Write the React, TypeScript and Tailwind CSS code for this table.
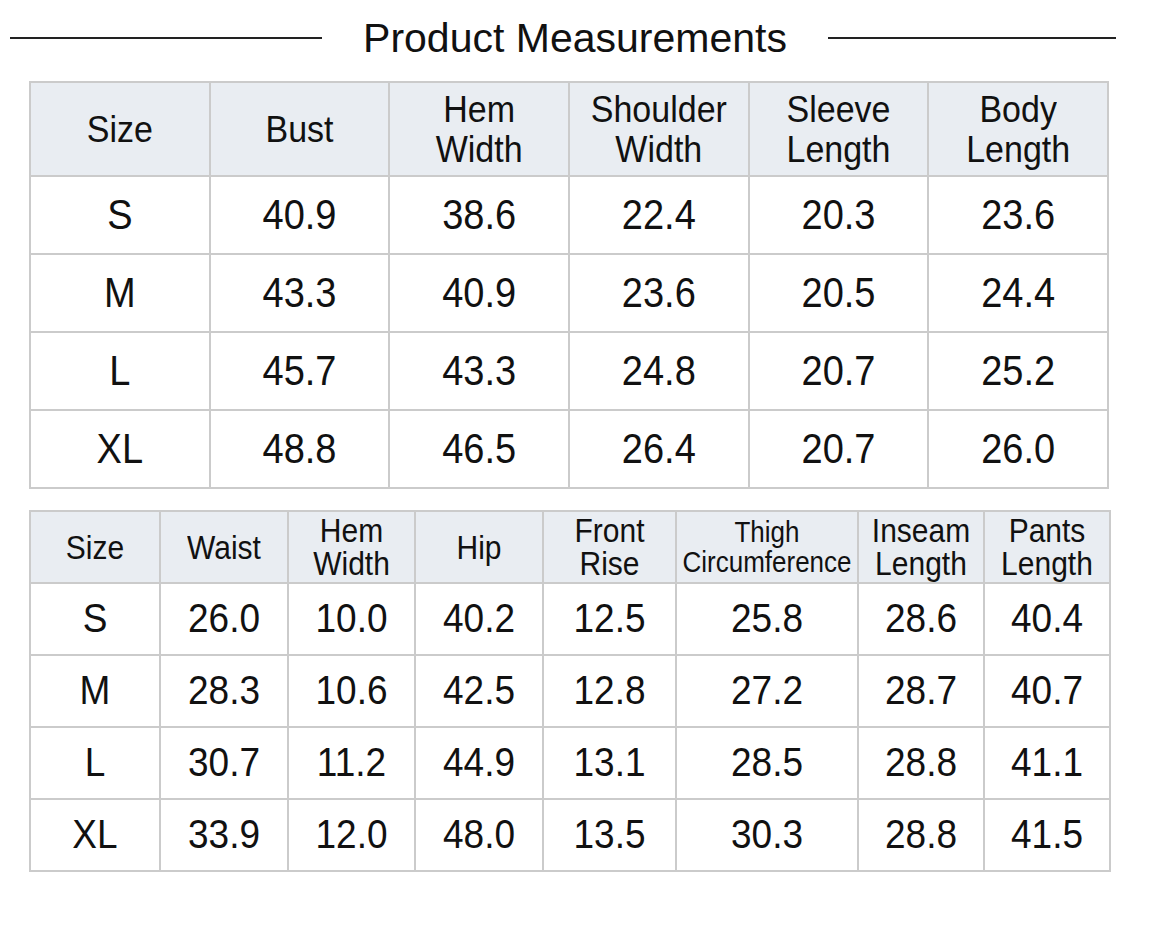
import React from "react";

const top = {
  headers: [["Size"], ["Bust"], ["Hem", "Width"], ["Shoulder", "Width"], ["Sleeve", "Length"], ["Body", "Length"]],
  rows: [
    ["S", "40.9", "38.6", "22.4", "20.3", "23.6"],
    ["M", "43.3", "40.9", "23.6", "20.5", "24.4"],
    ["L", "45.7", "43.3", "24.8", "20.7", "25.2"],
    ["XL", "48.8", "46.5", "26.4", "20.7", "26.0"],
  ],
};

const bottom = {
  headers: [["Size"], ["Waist"], ["Hem", "Width"], ["Hip"], ["Front", "Rise"], ["Thigh", "Circumference"], ["Inseam", "Length"], ["Pants", "Length"]],
  rows: [
    ["S", "26.0", "10.0", "40.2", "12.5", "25.8", "28.6", "40.4"],
    ["M", "28.3", "10.6", "42.5", "12.8", "27.2", "28.7", "40.7"],
    ["L", "30.7", "11.2", "44.9", "13.1", "28.5", "28.8", "41.1"],
    ["XL", "33.9", "12.0", "48.0", "13.5", "30.3", "28.8", "41.5"],
  ],
};

export default function App() {
  return (
    <div
      className="w-[1149px] h-[928px] bg-white text-[#111] overflow-hidden"
      style={{ fontFamily: '"Liberation Sans", Arial, sans-serif' }}
    >
      <div className="h-[76px] flex items-center pl-[10px] pr-[33px]">
        <div className="w-[312px] h-[1.5px] bg-[#222]" />
        <div className="flex-1 text-center text-[41px] leading-[48px]">Product Measurements</div>
        <div className="w-[288px] h-[1.5px] bg-[#222]" />
      </div>

      <div className="mt-[5px] ml-[29px] w-[1080px] bg-[#cbcbcb] p-[2px] grid grid-cols-6 gap-[2px]">
        {top.headers.map((h, i) => (
          <div key={i} className="h-[92px] bg-[#e9edf2] flex flex-col items-center justify-center text-[34px] leading-[40px]">
            {h.map((l, j) => (
              <span key={j} className="inline-block scale-y-110">{l}</span>
            ))}
          </div>
        ))}
        {top.rows.map((r, ri) =>
          r.map((c, ci) => (
            <div key={ri + "-" + ci} className="h-[76px] bg-white flex items-center justify-center text-[38px]">
              <span className="inline-block scale-y-110">{c}</span>
            </div>
          ))
        )}
      </div>

      <div className="mt-[21px] ml-[29px] w-[1082px] bg-[#cbcbcb] p-[2px] grid grid-cols-[128px_126px_125px_126px_131px_180px_124px_124px] gap-[2px]">
        {bottom.headers.map((h, i) => (
          <div
            key={i}
            className={
              "h-[70px] bg-[#e9edf2] flex flex-col items-center justify-center " +
              (i === 5 ? "text-[26px] leading-[30px]" : "text-[30px] leading-[33px]")
            }
          >
            {h.map((l, j) => (
              <span key={j} className="inline-block scale-y-110">{l}</span>
            ))}
          </div>
        ))}
        {bottom.rows.map((r, ri) =>
          r.map((c, ci) => (
            <div key={ri + "-" + ci} className="h-[70px] bg-white flex items-center justify-center text-[37px]">
              <span className="inline-block scale-y-110">{c}</span>
            </div>
          ))
        )}
      </div>
    </div>
  );
}
